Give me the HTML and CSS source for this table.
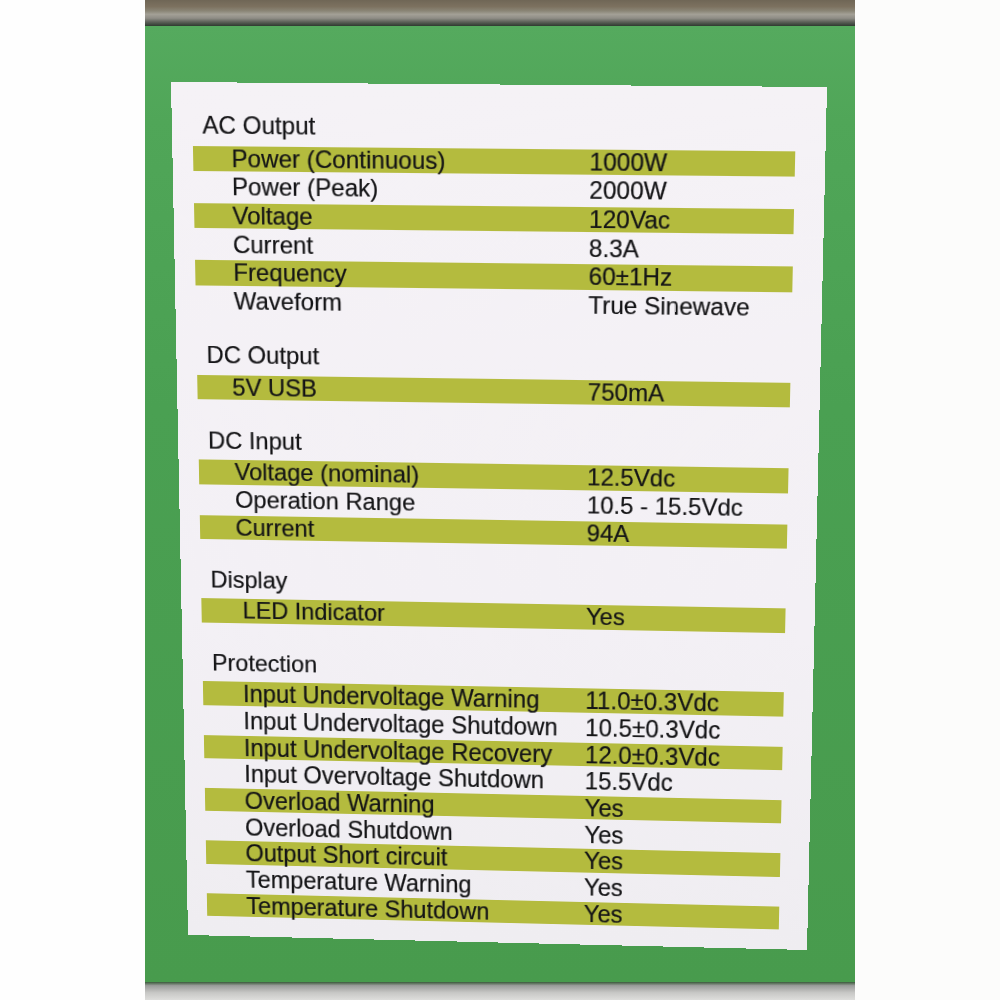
FILE: index.html
```html
<!DOCTYPE html>
<html lang="en">
<head>
<meta charset="utf-8">
<title>Inverter Specifications</title>
<link rel="stylesheet" href="styles.css">
</head>
<body>
<div class="photo">
  <div class="side"></div>
  <div class="box">
    <div class="box-top"></div>
    <div class="box-face">
      <div class="card">
        <section class="group g-ac">
          <h2 class="heading">AC Output</h2>
          <div class="rows">
            <div class="row"><span class="label">Power (Continuous)</span><span class="value">1000W</span></div>
            <div class="row"><span class="label">Power (Peak)</span><span class="value">2000W</span></div>
            <div class="row"><span class="label">Voltage</span><span class="value">120Vac</span></div>
            <div class="row"><span class="label">Current</span><span class="value">8.3A</span></div>
            <div class="row"><span class="label">Frequency</span><span class="value">60±1Hz</span></div>
            <div class="row"><span class="label">Waveform</span><span class="value">True Sinewave</span></div>
          </div>
        </section>
        <section class="group g-dcout">
          <h2 class="heading">DC Output</h2>
          <div class="rows">
            <div class="row"><span class="label">5V USB</span><span class="value">750mA</span></div>
          </div>
        </section>
        <section class="group g-dcin">
          <h2 class="heading">DC Input</h2>
          <div class="rows">
            <div class="row"><span class="label">Voltage (nominal)</span><span class="value">12.5Vdc</span></div>
            <div class="row"><span class="label">Operation Range</span><span class="value">10.5 - 15.5Vdc</span></div>
            <div class="row"><span class="label">Current</span><span class="value">94A</span></div>
          </div>
        </section>
        <section class="group g-display">
          <h2 class="heading">Display</h2>
          <div class="rows">
            <div class="row"><span class="label">LED Indicator</span><span class="value">Yes</span></div>
          </div>
        </section>
        <section class="group g-prot">
          <h2 class="heading">Protection</h2>
          <div class="rows">
            <div class="row"><span class="label">Input Undervoltage Warning</span><span class="value">11.0±0.3Vdc</span></div>
            <div class="row"><span class="label">Input Undervoltage Shutdown</span><span class="value">10.5±0.3Vdc</span></div>
            <div class="row"><span class="label">Input Undervoltage Recovery</span><span class="value">12.0±0.3Vdc</span></div>
            <div class="row"><span class="label">Input Overvoltage Shutdown</span><span class="value">15.5Vdc</span></div>
            <div class="row"><span class="label">Overload Warning</span><span class="value">Yes</span></div>
            <div class="row"><span class="label">Overload Shutdown</span><span class="value">Yes</span></div>
            <div class="row"><span class="label">Output Short circuit</span><span class="value">Yes</span></div>
            <div class="row"><span class="label">Temperature Warning</span><span class="value">Yes</span></div>
            <div class="row"><span class="label">Temperature Shutdown</span><span class="value">Yes</span></div>
          </div>
        </section>
      </div>
    </div>
    <div class="box-bottom"></div>
  </div>
  <div class="side side-right"></div>
</div>
</body>
</html>
```
FILE: styles.css
```css
html, body {
  margin: 0;
  padding: 0;
  background: #ffffff;
}

.photo {
  display: flex;
  width: 1000px;
  height: 1000px;
  overflow: hidden;
  font-family: "Liberation Sans", Arial, Helvetica, sans-serif;
  color: #141416;
}

.side {
  width: 145px;
  flex: none;
  background: #fefefe;
}

.side-right {
  background: #fcfcfb;
}

.box {
  width: 710px;
  flex: none;
  display: flex;
  flex-direction: column;
}

.box-top {
  height: 26px;
  flex: none;
  background:
    linear-gradient(to bottom, #6f6656 0, #7c715f 25%, #8a8576 42%, #a3a096 55%, #8f8d86 70%, #5e625a 84%, #2f3a30 100%);
}

.box-face {
  flex: 1;
  background:
    linear-gradient(to bottom, #55aa5e 0, #50a658 10%, #4aa052 40%, #489b4d 100%);
  padding: 56px 0 0 26px;
  box-sizing: border-box;
}

.box-bottom {
  height: 18px;
  flex: none;
  background: linear-gradient(to bottom, #3a5a3a 0, #9a9c9a 20%, #c8c8c6 60%, #dededc 100%);
}

.card {
  width: 656px;
  height: 860px;
  box-sizing: border-box;
  padding-top: 27px;
  background: linear-gradient(to bottom, #f5f2f6 0, #f3f0f5 60%, #efedf1 100%);
  transform-origin: 0 0;
  transform: matrix3d(0.987381, 0.0075259, 0, -0.0000192363, 0.020941, 1.050743, 0, 0.0000690302, 0, 0, 1, 0, 0, 0, 0, 1);
}

.group {
  margin-bottom: 25px;
}

.heading {
  margin: 0 0 4px 0;
  padding-left: 31px;
  font-size: 24.5px;
  font-weight: normal;
  line-height: 28px;
  -webkit-text-stroke: 0.2px #141416;
}

.rows {
  display: flex;
  flex-direction: column;
}

.row {
  display: grid;
  grid-template-columns: 400px 1fr;
  margin: 0 30px 0 21px;
  height: 27.7px;
  box-sizing: border-box;
  padding: 1.6px 0;
  background-clip: content-box;
  font-size: 24.5px;
  line-height: 24.5px;
  white-space: nowrap;
  -webkit-text-stroke: 0.2px #141416;
}

.rows .row:nth-child(odd) {
  background-color: #b4bb3e;
}

.label {
  padding-left: 39px;
}

.g-dcout .label { padding-left: 36px; }
.g-dcin .label { padding-left: 37px; }
.g-display .label { padding-left: 43px; }
.g-prot .label { padding-left: 42px; }
.g-prot .row { font-size: 25px; }

.value {
  padding-left: 0;
}
```
